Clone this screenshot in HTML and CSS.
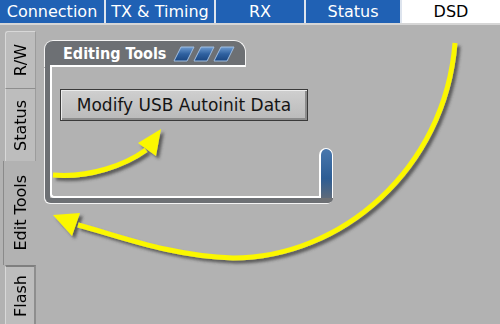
FILE: index.html
```html
<!DOCTYPE html>
<html lang="en">
<head>
    <meta charset="UTF-8">
    <title>DSD - Edit Tools</title>
    <link rel="stylesheet" href="styles.css">
</head>
<body>
    <div class="app">

        <!-- Top tab bar -->
        <nav class="top-tabs">
            <div class="top-tab tab-connection">Connection</div>
            <div class="top-tab tab-tx">TX &amp; Timing</div>
            <div class="top-tab tab-rx">RX</div>
            <div class="top-tab tab-status">Status</div>
            <div class="top-tab tab-dsd active">DSD</div>
        </nav>

        <div class="workspace">
            <!-- Side tabs -->
            <aside class="side-tabs">
                <div class="side-tab side-rw"><span>R/W</span></div>
                <div class="side-tab side-status"><span>Status</span></div>
                <div class="side-tab side-edit active"><span>Edit Tools</span></div>
                <div class="side-tab side-flash"><span>Flash</span></div>
            </aside>

            <main class="content">
                <section class="panel">
                    <div class="panel-title">
                        <span>Editing Tools</span>
                        <svg class="title-stripes" width="62" height="16" viewBox="0 0 62 16">
                            <defs>
                                <linearGradient id="stripe" x1="0" y1="0" x2="0" y2="1">
                                    <stop offset="0" stop-color="#6e9bd0"/>
                                    <stop offset="0.5" stop-color="#2f61a0"/>
                                    <stop offset="1" stop-color="#1b4680"/>
                                </linearGradient>
                            </defs>
                            <polygon points="8,1 21,1 14,15 1,15" fill="url(#stripe)" stroke="#9fbde0" stroke-width="1"/>
                            <polygon points="28,1 41,1 34,15 21,15" fill="url(#stripe)" stroke="#9fbde0" stroke-width="1"/>
                            <polygon points="48,1 61,1 54,15 41,15" fill="url(#stripe)" stroke="#9fbde0" stroke-width="1"/>
                        </svg>
                    </div>
                    <div class="panel-body">
                        <div class="panel-inner">
                            <button class="tool-button">Modify USB Autoinit Data</button>
                        </div>
                        <div class="panel-stub"></div>
                    </div>
                </section>
            </main>
        </div>

        <!-- Yellow callout arrows -->
        <svg class="annotations" width="500" height="324" viewBox="0 0 500 324">
            <defs>
                <filter id="shadow" x="-20%" y="-20%" width="140%" height="140%">
                    <feDropShadow dx="3" dy="3" stdDeviation="1.6" flood-color="#3c3c3c" flood-opacity="0.75"/>
                </filter>
            </defs>
            <g filter="url(#shadow)">
                <path d="M455,43 C445,170 340,258 233,258 C170,256 120,236 78,225" fill="none" stroke="#fbf700" stroke-width="5"/>
                <polygon points="53,215 80,213 72,236" fill="#fbf700"/>
                <path d="M53,175 C90,178 125,165 146,150" fill="none" stroke="#fbf700" stroke-width="5"/>
                <polygon points="161,129 138,143 156,156" fill="#fbf700"/>
            </g>
        </svg>
    </div>
</body>
</html>
```

FILE: styles.css
```css
* {
    margin: 0;
    padding: 0;
    box-sizing: border-box;
}

body {
    background-color: #b2b2b2;
    font-family: "DejaVu Sans", Verdana, sans-serif;
    width: 500px;
    height: 324px;
    overflow: hidden;
}

.app {
    position: relative;
    width: 500px;
    height: 324px;
}

/* Top tabs */
.top-tabs {
    display: flex;
    gap: 2px;
    height: 25px;
    background-color: #dde4ee;
    border-bottom: 2px solid #d6d6d6;
}

.top-tab {
    background-color: #2061b4;
    color: white;
    font-size: 16px;
    line-height: 23px;
    text-align: center;
}

.tab-connection { width: 104px; }
.tab-tx { width: 108px; }
.tab-rx { width: 88px; }
.tab-status { width: 94px; }
.tab-dsd { flex: 1; }

.top-tab.active {
    background-color: white;
    color: black;
}

/* Workspace */
.workspace {
    display: flex;
    height: 299px;
}

.side-tabs {
    width: 38px;
    padding: 6px 0 0 5px;
    display: flex;
    flex-direction: column;
}

.side-tab {
    width: 31px;
    background-color: #bdbdbd;
    border-left: 1px solid #d8d8d8;
    border-right: 1px solid #9c9c9c;
    display: flex;
    align-items: center;
    justify-content: center;
    font-size: 16px;
    color: black;
}

.side-tab span {
    writing-mode: vertical-rl;
    transform: rotate(180deg);
}

.side-rw {
    height: 57px;
    border-top: 1px solid #d8d8d8;
    border-radius: 3px 0 0 0;
}

.side-status {
    height: 73px;
    border-top: 1px solid #8e8e8e;
}

.side-edit {
    height: 104px;
    width: 33px;
    margin-left: -2px;
    background-color: #b2b2b2;
    border-left: 1px solid #8a8a8a;
    border-right: none;
}

.side-flash {
    flex: 1;
    border-top: 2px solid #7f7f7f;
    border-right: 2px solid #8e8e8e;
}

/* Content */
.content {
    flex: 1;
    padding: 15px 0 0 6px;
}

.panel {
    width: 289px;
}

.panel-title {
    width: 202px;
    height: 27px;
    display: flex;
    align-items: center;
    gap: 7px;
    padding: 0 0 2px 18px;
    color: white;
    font-weight: bold;
    font-size: 16px;
    font-stretch: condensed;
    border: 1px solid #f4f4f4;
    border-bottom: none;
    border-radius: 9px 12px 0 0;
    background:
        linear-gradient(#ffffff, #ffffff) no-repeat 5px 100% / calc(100% - 5px) 2px,
        #6d7074;
}

.title-stripes {
    margin-top: 2px;
}

.panel-body {
    margin-left: 1px;
    height: 136px;
    display: flex;
    align-items: flex-end;
    border-left: 5px solid #6d7074;
    border-bottom: 5px solid #6d7074;
    border-radius: 0 0 5px 6px;
    box-shadow: -1px 1px 0 #f4f4f4;
}

.panel-inner {
    flex: 1;
    align-self: stretch;
    padding: 22px 0 0 8px;
    border-left: 2px solid white;
    border-bottom: 2px solid white;
    border-radius: 0 0 0 4px;
}

.panel-stub {
    width: 14px;
    height: 50px;
    border: 1px solid white;
    border-left-width: 2px;
    border-bottom: none;
    border-radius: 7px 7px 0 0;
    background: linear-gradient(#4877ad, #2d5d94 60%, #5d6a7a);
}

.tool-button {
    width: 248px;
    height: 32px;
    font-family: "DejaVu Sans", Verdana, sans-serif;
    font-size: 17px;
    color: #151515;
    background: linear-gradient(#cfcfcf, #bababa);
    border: 1px solid #3a3a3a;
    box-shadow: inset 1px 1px 0 #ececec, inset -2px -2px 0 #8c8c8c;
    cursor: pointer;
}

/* Overlay arrows */
.annotations {
    position: absolute;
    top: 0;
    left: 0;
    pointer-events: none;
}
```
